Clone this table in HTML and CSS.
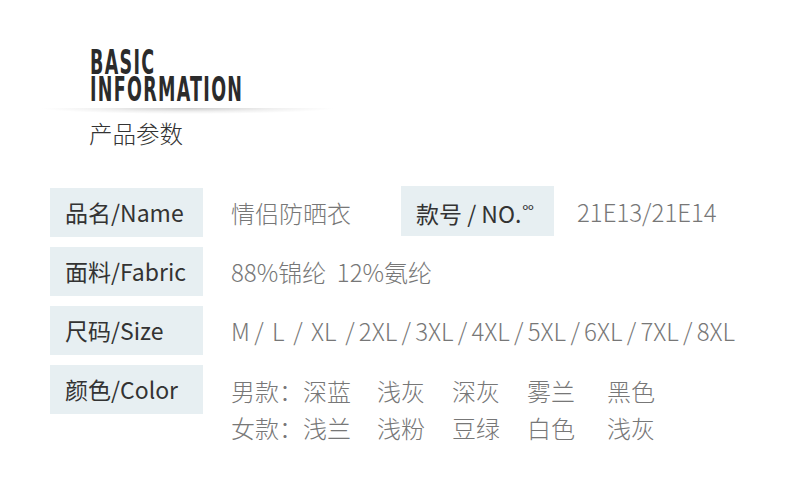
FILE: index.html
```html
<!DOCTYPE html>
<html lang="zh">
<head>
<meta charset="utf-8">
<title>产品参数</title>
<link rel="stylesheet" href="styles.css">
</head>
<body>
<div class="page">
  <header class="head">
    <div class="title"><div class="title-line">BASIC</div><div class="title-line">INFORMATION</div></div>
    <div class="shade"></div>
    <div class="subtitle">产品参数</div>
  </header>
  <section class="specs">
    <div class="row">
      <div class="label">品名/Name</div>
      <div class="value name">情侣防晒衣</div>
      <div class="label label-no">款号 / NO.<span class="sup">ºº</span></div>
      <div class="value code">21E13/21E14</div>
    </div>
    <div class="row">
      <div class="label">面料/Fabric</div>
      <div class="value">88%锦纶&nbsp;&nbsp;12%氨纶</div>
    </div>
    <div class="row">
      <div class="label">尺码/Size</div>
      <div class="value size">M /&nbsp; L&nbsp; /&nbsp; XL&nbsp; / 2XL / 3XL / 4XL / 5XL / 6XL / 7XL / 8XL</div>
    </div>
    <div class="row row-color">
      <div class="label">颜色/Color</div>
      <div class="colors">
        <span>男款：</span><span>深蓝</span><span>浅灰</span><span>深灰</span><span>雾兰</span><span>黑色</span>
        <span>女款：</span><span>浅兰</span><span>浅粉</span><span>豆绿</span><span>白色</span><span>浅灰</span>
      </div>
    </div>
  </section>
</div>
</body>
</html>
```
FILE: styles.css
```css
html, body {
  margin: 0;
  padding: 0;
  background: #ffffff;
}
body {
  font-family: "Noto Sans CJK SC", "Noto Sans", sans-serif;
  color: #333;
}
.page {
  width: 790px;
  height: 490px;
  overflow: hidden;
}
.head {
  padding-top: 49px;
  display: flex;
  flex-direction: column;
}
.title {
  margin-left: 90px;
  font-family: "DejaVu Sans Condensed", "DejaVu Sans", sans-serif;
  font-weight: bold;
  font-size: 33px;
  letter-spacing: 2.2px;
  color: #2b2b2b;
  transform: scaleX(0.59);
  transform-origin: left center;
}
.title-line {
  height: 27px;
  line-height: 28px;
  white-space: nowrap;
}
.shade {
  margin-left: 40px;
  margin-top: 5px;
  width: 295px;
  height: 10px;
  background: radial-gradient(ellipse 50% 60% at 50% 0%, rgba(0,0,0,0.2), rgba(0,0,0,0.06) 60%, rgba(0,0,0,0) 100%);
}
.subtitle {
  margin-left: 89px;
  margin-top: 0;
  font-size: 23.5px;
  font-weight: 300;
  line-height: 30px;
  color: #333;
}
.specs {
  margin-top: 40px;
  margin-left: 50px;
  display: flex;
  flex-direction: column;
  gap: 10px;
}
.row {
  display: flex;
  align-items: center;
  height: 49px;
}
.row-color {
  align-items: flex-start;
  height: 80px;
}
.label {
  width: 153px;
  height: 49px;
  box-sizing: border-box;
  padding-left: 15px;
  background: #e7eff2;
  font-size: 23px;
  line-height: 49px;
  color: #333;
  white-space: nowrap;
  flex: none;
}
.label-no {
  height: 50px;
  margin-top: -3px;
  padding-left: 15px;
}
.sup {
  font-size: 14px;
  vertical-align: 7px;
  margin-left: 1px;
}
.value {
  margin-left: 28px;
  font-size: 24px;
  font-weight: 300;
  color: #777;
  white-space: nowrap;
}
.name {
  width: 170px;
  flex: none;
}
.code {
  margin-left: 0;
  padding-left: 23px;
  margin-top: -2px;
}
.size {
  word-spacing: -1.05px;
}
.colors {
  margin-left: 28px;
  margin-top: 7px;
  display: grid;
  grid-template-columns: 72px 74px 75px 75px 80px 60px;
  font-size: 24px;
  font-weight: 300;
  line-height: 37px;
  color: #777;
  white-space: nowrap;
}
```
